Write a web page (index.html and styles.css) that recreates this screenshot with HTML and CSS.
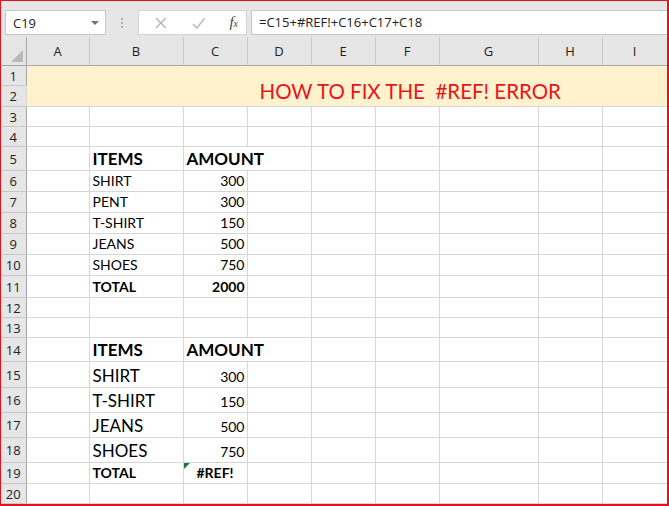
FILE: index.html
```html
<!DOCTYPE html>
<html>
<head>
  <meta charset="UTF-8">
  <title>How to fix the #REF! error</title>
  <link rel="stylesheet" href="styles.css">
</head>
<body>

<div class="frame">
  <div class="toolbar">
    <div class="name-box">
      <span>C19</span>
      <span class="caret"></span>
    </div>
    <div class="grip"><i></i><i></i><i></i></div>
    <div class="fx-buttons">
      <svg class="ico" width="14" height="14" viewBox="0 0 14 14"><path d="M2 2 L12 12 M12 2 L2 12" stroke="#b4b4b4" stroke-width="1.4" fill="none"/></svg>
      <svg class="ico" width="16" height="14" viewBox="0 0 16 14"><path d="M2 8 L6 12 L14 2" stroke="#b4b4b4" stroke-width="1.4" fill="none"/></svg>
      <span class="fx">f<sub>x</sub></span>
    </div>
    <div class="formula">=C15+#REF!+C16+C17+C18</div>
  </div>

  <table class="sheet">
    <colgroup>
      <col style="width:25px"><col style="width:63px"><col style="width:94px"><col style="width:64px">
      <col style="width:64px"><col style="width:64px"><col style="width:64px"><col style="width:99px">
      <col style="width:64px"><col style="width:65px">
    </colgroup>
    <tr class="head">
      <th class="corner"><span class="tri"></span></th>
      <th>A</th><th>B</th><th>C</th><th>D</th><th>E</th><th>F</th><th>G</th><th>H</th><th>I</th>
    </tr>
    <tr class="h20"><th>1</th><td class="title" colspan="9" rowspan="2">HOW TO FIX THE&nbsp; #REF! ERROR</td></tr>
    <tr class="h21"><th>2</th></tr>
    <tr class="h20"><th>3</th><td></td><td></td><td></td><td></td><td></td><td></td><td></td><td></td><td></td></tr>
    <tr class="h20"><th>4</th><td></td><td></td><td></td><td></td><td></td><td></td><td></td><td></td><td></td></tr>
    <tr class="h24"><th>5</th><td></td><td class="big b">ITEMS</td><td class="big b over">AMOUNT</td><td class="noleft"></td><td></td><td></td><td></td><td></td><td></td></tr>
    <tr class="h21"><th>6</th><td></td><td>SHIRT</td><td class="num">300</td><td></td><td></td><td></td><td></td><td></td><td></td></tr>
    <tr class="h21"><th>7</th><td></td><td>PENT</td><td class="num">300</td><td></td><td></td><td></td><td></td><td></td><td></td></tr>
    <tr class="h21"><th>8</th><td></td><td>T-SHIRT</td><td class="num">150</td><td></td><td></td><td></td><td></td><td></td><td></td></tr>
    <tr class="h21"><th>9</th><td></td><td>JEANS</td><td class="num">500</td><td></td><td></td><td></td><td></td><td></td><td></td></tr>
    <tr class="h21"><th>10</th><td></td><td>SHOES</td><td class="num">750</td><td></td><td></td><td></td><td></td><td></td><td></td></tr>
    <tr class="h22"><th>11</th><td></td><td class="b">TOTAL</td><td class="num b">2000</td><td></td><td></td><td></td><td></td><td></td><td></td></tr>
    <tr class="h20"><th>12</th><td></td><td></td><td></td><td></td><td></td><td></td><td></td><td></td><td></td></tr>
    <tr class="h20"><th>13</th><td></td><td></td><td></td><td></td><td></td><td></td><td></td><td></td><td></td></tr>
    <tr class="h24"><th>14</th><td></td><td class="big b">ITEMS</td><td class="big b over">AMOUNT</td><td class="noleft"></td><td></td><td></td><td></td><td></td><td></td></tr>
    <tr class="h26"><th>15</th><td></td><td class="big">SHIRT</td><td class="num">300</td><td></td><td></td><td></td><td></td><td></td><td></td></tr>
    <tr class="h25"><th>16</th><td></td><td class="big">T-SHIRT</td><td class="num">150</td><td></td><td></td><td></td><td></td><td></td><td></td></tr>
    <tr class="h25"><th>17</th><td></td><td class="big">JEANS</td><td class="num">500</td><td></td><td></td><td></td><td></td><td></td><td></td></tr>
    <tr class="h25"><th>18</th><td></td><td class="big">SHOES</td><td class="num">750</td><td></td><td></td><td></td><td></td><td></td><td></td></tr>
    <tr class="h21"><th>19</th><td></td><td class="b">TOTAL</td><td class="err b"><span class="flag"></span>#REF!</td><td></td><td></td><td></td><td></td><td></td><td></td></tr>
    <tr class="h20"><th>20</th><td></td><td></td><td></td><td></td><td></td><td></td><td></td><td></td><td></td></tr>
  </table>
</div>

</body>
</html>
```

FILE: styles.css
```css
html, body {
  margin: 0;
  padding: 0;
  background: #fff;
}

.frame {
  width: 669px;
  height: 506px;
  box-sizing: border-box;
  border: 1px solid #e0141e;
  border-right-width: 2px;
  border-bottom-width: 2px;
  overflow: hidden;
  background: #fff;
}

/* formula bar */
.toolbar {
  height: 36px;
  box-sizing: border-box;
  padding: 9px 0 0 4px;
  background: #e6e6e6;
  display: flex;
  align-items: flex-start;
  font-family: "Open Sans", "Noto Sans", sans-serif;
  font-size: 13px;
  color: #222;
}

.name-box {
  width: 101px;
  height: 25px;
  box-sizing: border-box;
  background: #fff;
  border: 1px solid #c6c6c6;
  display: flex;
  align-items: center;
  justify-content: space-between;
  padding: 0 6px 0 7px;
}

.caret {
  width: 0;
  height: 0;
  border-left: 4px solid transparent;
  border-right: 4px solid transparent;
  border-top: 4px solid #707070;
}

.grip {
  width: 32px;
  height: 25px;
  display: flex;
  flex-direction: column;
  align-items: center;
  justify-content: center;
  gap: 2px;
}

.grip i {
  width: 2px;
  height: 2px;
  background: #b0b0b0;
}

.fx-buttons {
  width: 109px;
  height: 25px;
  box-sizing: border-box;
  background: #fff;
  border: 1px solid #d2d2d2;
  display: flex;
  align-items: center;
  padding: 0 8px 0 15px;
  gap: 23px;
}

.fx {
  margin-left: auto;
  font-family: "Liberation Serif", serif;
  font-style: italic;
  font-size: 15px;
  color: #444;
}

.fx sub {
  font-size: 10px;
  vertical-align: 0;
}

.formula {
  flex: 1;
  height: 25px;
  box-sizing: border-box;
  margin-left: 4px;
  background: #fff;
  border: 1px solid #c6c6c6;
  border-right: none;
  padding: 0 0 0 7px;
  line-height: 23px;
}

/* grid */
.sheet {
  border-collapse: collapse;
  table-layout: fixed;
  width: 666px;
  font-family: Lato, "Open Sans", sans-serif;
  font-size: 14px;
  color: #000;
}

.sheet th {
  background: #e6e6e6;
  font-family: "Open Sans", "Noto Sans", sans-serif;
  font-weight: normal;
  font-size: 13px;
  color: #222;
  border: 1px solid #c8c8c8;
  padding: 0;
  text-align: center;
  vertical-align: middle;
}

.sheet tr.head th {
  height: 28px;
  border-top: none;
  border-bottom: 1px solid #a6a6a6;
}

.sheet tr th:first-child {
  border-left: none;
  border-right: 1px solid #a6a6a6;
}

.corner {
  position: relative;
}

.corner .tri {
  position: absolute;
  right: 3px;
  bottom: 3px;
  width: 0;
  height: 0;
  border-left: 12px solid transparent;
  border-bottom: 12px solid #b9b9b9;
}

.sheet td {
  border: 1px solid #d6d6d6;
  padding: 0 3px 2px 3px;
  vertical-align: bottom;
  white-space: nowrap;
  line-height: 17px;
  overflow: visible;
}

.sheet tr td:last-child {
  border-right: none;
}

.h20 { height: 20px; }
.h21 { height: 21px; }
.h22 { height: 22px; }
.h24 { height: 24px; }
.h25 { height: 25px; }
.h26 { height: 26px; }

.sheet .title {
  background: #fff2cc;
  color: #e8141c;
  font-size: 20.5px;
  line-height: 24px;
  padding: 0 0 3px 233px;
}

.sheet .big {
  font-size: 17px;
  line-height: 21px;
  padding-bottom: 1px;
}

.sheet .b {
  font-weight: bold;
}

.sheet .over {
  position: relative;
  z-index: 1;
  border-right-color: transparent;
}

.sheet .noleft {
  border-left-color: transparent;
}

.sheet .num {
  text-align: right;
  padding-right: 2px;
}

.sheet .err {
  position: relative;
  text-align: center;
}

.flag {
  position: absolute;
  left: 0;
  top: 0;
  width: 0;
  height: 0;
  border-top: 6px solid #1e7b34;
  border-right: 6px solid transparent;
}
```
